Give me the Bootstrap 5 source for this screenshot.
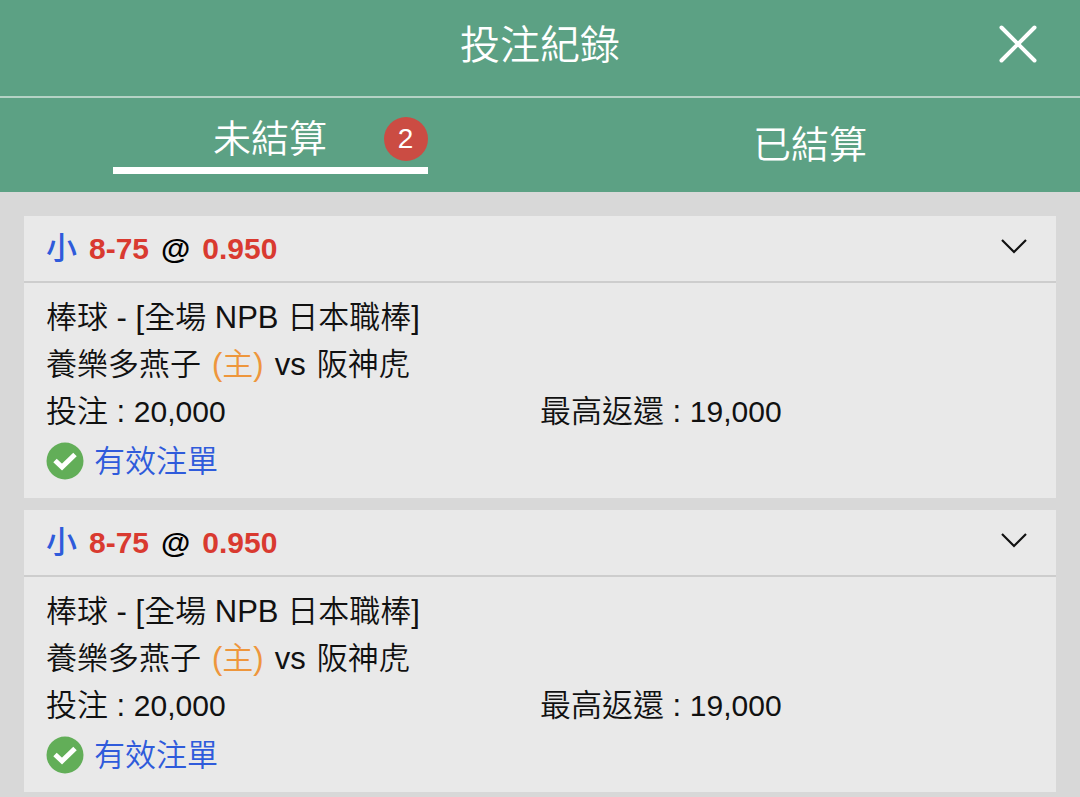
<!DOCTYPE html>
<html lang="zh-Hant">
<head>
<meta charset="utf-8">
<meta name="viewport" content="width=device-width, initial-scale=1">
<title>投注紀錄</title>
<link href="https://cdn.jsdelivr.net/npm/bootstrap@5.3.0/dist/css/bootstrap.min.css" rel="stylesheet">
<style>
  body { background: #d8d8d8; color: #111; font-family: "Liberation Sans", "Noto Sans CJK TC", sans-serif; font-size: 31px; line-height: 47px; font-weight: 350; }
  .topbar { background: #5ca184; color: #fff; }
  .title-row { height: 98px; border-bottom: 2px solid #b5d2c5; padding-bottom: 6px; }
  .title-row h1 { font-size: 40px; line-height: 56px; font-weight: 350; }
  .close-btn { right: 42px; top: 24px; line-height: 0; }
  .tab-row { height: 94px; }
  .tab-btn { font-size: 38px; line-height: 54px; color: #fff; font-weight: 350; }
  .tab-btn.active { height: 76px; padding-top: 12px; border-bottom: 7px solid #fff; }
  .count { right: 0; top: 19px; width: 44px; height: 44px; line-height: 44px; font-size: 28px; background: #cb4c43; }
  .bets { padding: 24px 24px 4px; gap: 12px; }
  .bet { background: #e9e9e9; }
  .bet-head { height: 67px; padding: 0 28px 0 22px; border-bottom: 2px solid #cdcdcd; font-weight: 700; font-size: 30px; color: #000; }
  .pick { gap: 12px; }
  .side { font-size: 31px; font-weight: 500; }
  .chevron { margin-bottom: 6px; }
  .bet-body { padding: 11px 22px; }
  .teams { gap: 11px; }
  .amount { font-size: 30px; }
  .bet-status { height: 52px; gap: 10px; }
  .c-red { color: #d93a30; }
  .c-blue { color: #2f5bdb; }
  .c-orange { color: #ee963c; }
</style>
</head>
<body>
<header class="topbar">
  <div class="title-row position-relative d-flex align-items-center justify-content-center">
    <h1 class="m-0">投注紀錄</h1>
    <button type="button" class="close-btn btn p-0 border-0 position-absolute" aria-label="關閉">
      <svg width="40" height="40" viewBox="0 0 40 40" fill="none" stroke="#fff" stroke-width="4" stroke-linecap="round"><path d="M3.500 3.500 36.500 36.500M36.500 3.500 3.500 36.500"/></svg>
    </button>
  </div>
  <nav class="tab-row row g-0">
    <div class="col-6 d-flex justify-content-center align-items-start">
      <button type="button" class="tab-btn active col-7 bg-transparent border-top-0 border-start-0 border-end-0 px-0 pb-0 position-relative">未結算<span class="count position-absolute rounded-circle">2</span></button>
    </div>
    <div class="col-6 d-flex justify-content-center align-items-center">
      <button type="button" class="tab-btn col-7 bg-transparent border-0 p-0">已結算</button>
    </div>
  </nav>
</header>
<main class="bets d-flex flex-column">
  <section class="bet">
    <button type="button" class="bet-head w-100 bg-transparent border-top-0 border-start-0 border-end-0 d-flex align-items-center justify-content-between" data-bs-toggle="collapse" data-bs-target="#bet1" aria-expanded="true">
      <span class="pick d-flex align-items-baseline"><span class="side c-blue">小</span> <span class="c-red">8-75</span> <span>@</span> <span class="c-red">0.950</span></span>
      <svg class="chevron" width="28" height="18" viewBox="0 0 28 18" fill="none" stroke="#111" stroke-width="2.200"><path d="M2 3 14 15 26 3"/></svg>
    </button>
    <div id="bet1" class="collapse show">
      <div class="bet-body">
        <div>棒球 - [全場 NPB 日本職棒]</div>
        <div class="teams d-flex"><span>養樂多燕子</span> <span class="c-orange">(主)</span> <span>vs</span> <span>阪神虎</span></div>
        <div class="row g-0"><div class="col-6">投注 : <span class="amount">20,000</span></div><div class="col-6">最高返還 : <span class="amount">19,000</span></div></div>
        <div class="bet-status d-flex align-items-center c-blue">
          <svg width="38" height="38" viewBox="0 0 38 38"><circle cx="19" cy="19" r="18.5" fill="#62ae58"/><path d="M9 18.500 16 25 29 12.500" fill="none" stroke="#fff" stroke-width="5"/></svg>
          <span>有效注單</span>
        </div>
      </div>
    </div>
  </section>
  <section class="bet">
    <button type="button" class="bet-head w-100 bg-transparent border-top-0 border-start-0 border-end-0 d-flex align-items-center justify-content-between" data-bs-toggle="collapse" data-bs-target="#bet2" aria-expanded="true">
      <span class="pick d-flex align-items-baseline"><span class="side c-blue">小</span> <span class="c-red">8-75</span> <span>@</span> <span class="c-red">0.950</span></span>
      <svg class="chevron" width="28" height="18" viewBox="0 0 28 18" fill="none" stroke="#111" stroke-width="2.200"><path d="M2 3 14 15 26 3"/></svg>
    </button>
    <div id="bet2" class="collapse show">
      <div class="bet-body">
        <div>棒球 - [全場 NPB 日本職棒]</div>
        <div class="teams d-flex"><span>養樂多燕子</span> <span class="c-orange">(主)</span> <span>vs</span> <span>阪神虎</span></div>
        <div class="row g-0"><div class="col-6">投注 : <span class="amount">20,000</span></div><div class="col-6">最高返還 : <span class="amount">19,000</span></div></div>
        <div class="bet-status d-flex align-items-center c-blue">
          <svg width="38" height="38" viewBox="0 0 38 38"><circle cx="19" cy="19" r="18.5" fill="#62ae58"/><path d="M9 18.500 16 25 29 12.500" fill="none" stroke="#fff" stroke-width="5"/></svg>
          <span>有效注單</span>
        </div>
      </div>
    </div>
  </section>
</main>
<script src="https://cdn.jsdelivr.net/npm/bootstrap@5.3.0/dist/js/bootstrap.bundle.min.js"></script>
</body>
</html>
